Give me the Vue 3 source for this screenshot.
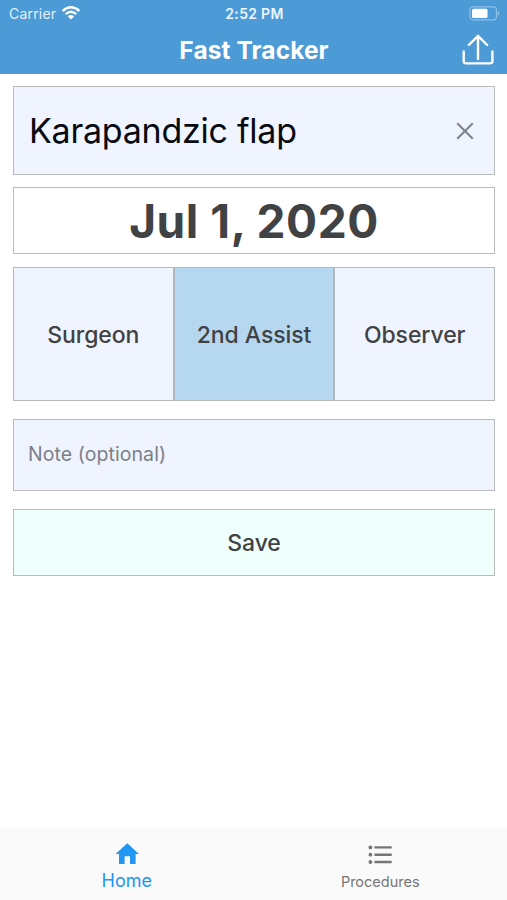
<script setup>
import { ref } from 'vue'

const procedure = ref('Karapandzic flap')
const roles = ['Surgeon', '2nd Assist', 'Observer']
const selected = ref('2nd Assist')
</script>

<template>
  <div class="screen">
    <header class="header">
      <div class="status">
        <div class="carrier">
          <span class="carrier-name">Carrier</span>
          <svg class="wifi" width="20" height="16" viewBox="0 0 20 16">
            <path d="M1.6 6 Q10 -1.6 18.4 6" />
            <path d="M4.8 9.2 Q10 4.4 15.2 9.2" />
            <path class="solid" d="M10 14.6 L6.8 11.4 Q10 8.8 13.2 11.4 Z" />
          </svg>
        </div>
        <span class="time">2:52 PM</span>
        <svg class="battery" width="31" height="15" viewBox="0 0 31 15">
          <rect class="shell" x="1" y="0.8" width="26.5" height="13" rx="3" />
          <rect class="level" x="3" y="2.7" width="15.5" height="9.2" rx="1.5" />
          <path class="cap" d="M28.6 4.8 Q32 7.3 28.6 9.8 Z" />
        </svg>
      </div>
      <div class="titlebar">
        <h1 class="title">Fast Tracker</h1>
        <svg class="share" width="32" height="32" viewBox="0 0 32 32">
          <path d="M1.7 17.5 V27 Q1.7 29.4 4.1 29.4 H28 Q30.4 29.4 30.4 27 V17.5 M16 25 V2 M6.8 11 L16 1.8 L25.2 11" />
        </svg>
      </div>
    </header>

    <main class="form">
      <div class="box procedure">
        <span class="procedure-name">{{ procedure }}</span>
        <svg class="clear" width="18" height="18" viewBox="0 0 18 18">
          <path d="M1.2 1.2 L16.8 16.8 M16.8 1.2 L1.2 16.8" />
        </svg>
      </div>
      <div class="box date"><span>Jul 1, 2020</span></div>
      <div class="roles">
        <div
          v-for="role in roles"
          :key="role"
          class="role"
          :class="{ active: role === selected }"
          @click="selected = role"
        >
          <span>{{ role }}</span>
        </div>
      </div>
      <div class="box note"><span>Note (optional)</span></div>
      <div class="box save"><span>Save</span></div>
    </main>

    <nav class="tabs">
      <div class="tab home">
        <svg width="24" height="22" viewBox="0 0 24 22">
          <path d="M12.3 0.3 L0.6 11 H4 V21 H9.6 V13.2 H15 V21 H20.6 V11 H24 Z" />
        </svg>
        <span>Home</span>
      </div>
      <div class="tab procedures">
        <svg width="24" height="20" viewBox="0 0 24 20">
          <circle cx="2.4" cy="2.4" r="1.9" />
          <circle cx="2.4" cy="9.7" r="1.9" />
          <circle cx="2.4" cy="17" r="1.9" />
          <path d="M6.4 1.2 H23.7 V3.6 H6.4 Z M6.4 8.5 H23.7 V10.9 H6.4 Z M6.4 15.8 H23.7 V18.2 H6.4 Z" />
        </svg>
        <span>Procedures</span>
      </div>
    </nav>
  </div>
</template>

<style>
body {
  margin: 0;
  background: #fff;
}
</style>

<style scoped>
.screen {
  width: 507px;
  height: 900px;
  display: flex;
  flex-direction: column;
  background: #fff;
  font-family: Inter, "Liberation Sans", sans-serif;
  color: #414244;
  white-space: nowrap;
  overflow: hidden;
}
svg {
  display: block;
  flex: none;
}
.header {
  height: 74px;
  flex: none;
  background: #4c9ad6;
  color: #fff;
}
.status {
  height: 26px;
  display: grid;
  grid-template-columns: 1fr auto 1fr;
  align-items: center;
  padding: 0 7px 0 9px;
  box-sizing: border-box;
}
.carrier {
  display: flex;
  align-items: center;
  gap: 5px;
}
.carrier-name {
  font-size: 14px;
  letter-spacing: 0.2px;
  color: #e2f1fd;
}
.wifi path {
  fill: none;
  stroke: #fff;
  stroke-width: 2.4;
}
.wifi .solid {
  fill: #fff;
  stroke: none;
}
.time {
  padding-top: 1px;
  font-size: 14px;
  font-weight: 600;
  letter-spacing: 0.3px;
  color: #eef7ff;
}
.battery {
  justify-self: end;
}
.shell {
  fill: none;
  stroke: #8dc0e9;
  stroke-width: 1.2;
}
.level {
  fill: #fff;
}
.cap {
  fill: #8dc0e9;
}
.titlebar {
  height: 47px;
  display: grid;
  grid-template-columns: 1fr auto 1fr;
  align-items: center;
  padding: 0 13px 0 14px;
}
.title {
  grid-column: 2;
  margin: 0;
  padding-top: 1px;
  font-size: 24.5px;
  line-height: 30px;
  font-weight: 700;
  letter-spacing: 0.1px;
}
.share {
  justify-self: end;
}
.share path {
  fill: none;
  stroke: #fff;
  stroke-width: 2.4;
  stroke-linecap: round;
  stroke-linejoin: round;
}
.form {
  flex: 1;
  display: flex;
  flex-direction: column;
  padding: 12px 12px 0 13px;
}
.box {
  display: flex;
  align-items: center;
  justify-content: center;
  box-sizing: border-box;
  border: 1px solid #b9bbbd;
}
.procedure {
  height: 89px;
  padding: 0 20px 1px 15px;
  justify-content: space-between;
  background: #f0f4ff;
}
.procedure-name {
  font-size: 34px;
  letter-spacing: -0.25px;
  color: #070a10;
}
.date {
  height: 67px;
  margin-top: 12px;
  font-size: 46px;
  font-weight: 700;
  letter-spacing: 0.55px;
}
.clear {
  margin-top: 1px;
}
.clear path {
  fill: none;
  stroke: #7e828b;
  stroke-width: 2;
}
.roles {
  height: 134px;
  margin-top: 13px;
  display: grid;
  grid-template-columns: repeat(3, 1fr);
}
.role {
  display: flex;
  align-items: center;
  justify-content: center;
  padding-top: 2px;
  border: 1px solid #b4b7ba;
  background: #f0f4ff;
  font-size: 23px;
  font-weight: 500;
  letter-spacing: -0.08px;
}
.role.active {
  background: #b6d7f0;
}
.note {
  height: 72px;
  margin-top: 18px;
  padding: 0 0 2px 14px;
  justify-content: flex-start;
  background: #f0f4ff;
  color: #7b7f89;
  font-size: 19.5px;
  letter-spacing: 0.07px;
}
.save {
  height: 67px;
  margin-top: 18px;
  padding-top: 1px;
  background: #eefffc;
  font-size: 23px;
  font-weight: 500;
  letter-spacing: -0.08px;
}
.tabs {
  height: 72px;
  flex: none;
  display: grid;
  grid-template-columns: 1fr 1fr;
  background: #fafafa;
}
.tab {
  display: flex;
  flex-direction: column;
  align-items: center;
}
.home {
  padding-top: 15px;
  gap: 5px;
  color: #2196f3;
  font-size: 18px;
}
.procedures {
  padding-top: 17px;
  gap: 8px;
  color: #757575;
  font-size: 14.5px;
}
.tab svg {
  fill: currentColor;
}
</style>
